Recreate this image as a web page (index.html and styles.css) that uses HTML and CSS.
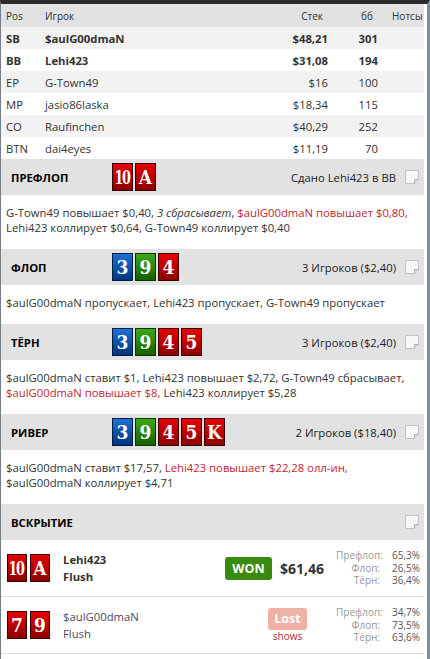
FILE: index.html
```html
<!DOCTYPE html>
<html lang="ru">
<head>
  <meta charset="UTF-8">
  <title>Раздача</title>
  <link rel="stylesheet" href="styles.css">
</head>
<body>
<div class="frame">

  <table class="seats">
    <colgroup>
      <col class="c-pos"><col class="c-name"><col class="c-stack"><col class="c-bb"><col class="c-notes">
    </colgroup>
    <thead>
      <tr><th>Pos</th><th>Игрок</th><th class="num">Стек</th><th class="num">бб</th><th>Нотсы</th></tr>
    </thead>
    <tbody>
      <tr class="hero"><td>SB</td><td>$aulG00dmaN</td><td class="num">$48,21</td><td class="num">301</td><td></td></tr>
      <tr class="hero"><td>BB</td><td>Lehi423</td><td class="num">$31,08</td><td class="num">194</td><td></td></tr>
      <tr><td>EP</td><td>G-Town49</td><td class="num">$16</td><td class="num">100</td><td></td></tr>
      <tr><td>MP</td><td>jasio86laska</td><td class="num">$18,34</td><td class="num">115</td><td></td></tr>
      <tr><td>CO</td><td>Raufinchen</td><td class="num">$40,29</td><td class="num">252</td><td></td></tr>
      <tr><td>BTN</td><td>dai4eyes</td><td class="num">$11,19</td><td class="num">70</td><td></td></tr>
    </tbody>
  </table>

  <div class="street-head">
    <span class="street-title">ПРЕФЛОП</span>
    <span class="cards"><span class="card red"><span class="ten">10</span></span><span class="card red">A</span></span>
    <span class="street-info">Сдано Lehi423 в BB</span>
    <svg class="note" width="14" height="14" viewBox="0 0 14 14"><path d="M0.5 0.5h13v9l-4 4h-9z" fill="#f7f7f7" stroke="#c2c2c2"/><path d="M13.5 9.5h-4v4" fill="#dedede" stroke="#b0b0b0"/></svg>
  </div>
  <div class="street-body">
    G-Town49 повышает $0,40, <i>3 сбрасывает</i>, <span class="hl">$aulG00dmaN повышает $0,80,</span>
    Lehi423 коллирует $0,64, G-Town49 коллирует $0,40
  </div>

  <div class="street-head">
    <span class="street-title">ФЛОП</span>
    <span class="cards"><span class="card blue">3</span><span class="card green">9</span><span class="card red">4</span></span>
    <span class="street-info">3 Игроков ($2,40)</span>
    <svg class="note" width="14" height="14" viewBox="0 0 14 14"><path d="M0.5 0.5h13v9l-4 4h-9z" fill="#f7f7f7" stroke="#c2c2c2"/><path d="M13.5 9.5h-4v4" fill="#dedede" stroke="#b0b0b0"/></svg>
  </div>
  <div class="street-body">
    $aulG00dmaN пропускает, Lehi423 пропускает, G-Town49 пропускает
  </div>

  <div class="street-head">
    <span class="street-title">ТЁРН</span>
    <span class="cards"><span class="card blue">3</span><span class="card green">9</span><span class="card red">4</span><span class="card red">5</span></span>
    <span class="street-info">3 Игроков ($2,40)</span>
    <svg class="note" width="14" height="14" viewBox="0 0 14 14"><path d="M0.5 0.5h13v9l-4 4h-9z" fill="#f7f7f7" stroke="#c2c2c2"/><path d="M13.5 9.5h-4v4" fill="#dedede" stroke="#b0b0b0"/></svg>
  </div>
  <div class="street-body">
    $aulG00dmaN ставит $1, Lehi423 повышает $2,72, G-Town49 сбрасывает,
    <span class="hl">$aulG00dmaN повышает $8,</span> Lehi423 коллирует $5,28
  </div>

  <div class="street-head">
    <span class="street-title">РИВЕР</span>
    <span class="cards"><span class="card blue">3</span><span class="card green">9</span><span class="card red">4</span><span class="card red">5</span><span class="card red">K</span></span>
    <span class="street-info">2 Игроков ($18,40)</span>
    <svg class="note" width="14" height="14" viewBox="0 0 14 14"><path d="M0.5 0.5h13v9l-4 4h-9z" fill="#f7f7f7" stroke="#c2c2c2"/><path d="M13.5 9.5h-4v4" fill="#dedede" stroke="#b0b0b0"/></svg>
  </div>
  <div class="street-body">
    $aulG00dmaN ставит $17,57, <span class="hl">Lehi423 повышает $22,28 олл-ин,</span>
    $aulG00dmaN коллирует $4,71
  </div>

  <div class="street-head">
    <span class="street-title">ВСКРЫТИЕ</span>
    <span class="street-info"></span>
    <svg class="note" width="14" height="14" viewBox="0 0 14 14"><path d="M0.5 0.5h13v9l-4 4h-9z" fill="#f7f7f7" stroke="#c2c2c2"/><path d="M13.5 9.5h-4v4" fill="#dedede" stroke="#b0b0b0"/></svg>
  </div>

  <div class="show-row">
    <span class="cards"><span class="card red"><span class="ten">10</span></span><span class="card red">A</span></span>
    <div class="who winner">Lehi423<br>Flush</div>
    <div class="result">
      <span class="badge won">WON</span>
      <span class="amount">$61,46</span>
    </div>
    <div class="equity">
      <span>Префлоп:</span><span>65,3%</span>
      <span>Флоп:</span><span>26,5%</span>
      <span>Тёрн:</span><span>36,4%</span>
    </div>
  </div>

  <div class="show-row">
    <span class="cards"><span class="card red">7</span><span class="card red">9</span></span>
    <div class="who">$aulG00dmaN<br>Flush</div>
    <div class="result">
      <div class="lost-wrap">
        <span class="badge lost">Lost</span>
        <span class="shows">shows</span>
      </div>
    </div>
    <div class="equity">
      <span>Префлоп:</span><span>34,7%</span>
      <span>Флоп:</span><span>73,5%</span>
      <span>Тёрн:</span><span>63,6%</span>
    </div>
  </div>

</div>
</body>
</html>
```

FILE: styles.css
```css
* {
  margin: 0;
  padding: 0;
  box-sizing: border-box;
}

body {
  background: #fff;
  color: #333;
  font-family: 'Open Sans', sans-serif;
  font-size: 11.3px;
}

.frame {
  width: 430px;
  min-height: 659px;
  border-top: 4px solid #2a2a2a;
  border-left: 1px solid #6f7f8f;
  border-right: 3px solid #7d8d9d;
  padding-right: 3px;
}

/* seats table */

.seats {
  width: 100%;
  border-collapse: collapse;
  table-layout: fixed;
}

.c-pos { width: 39px; }
.c-stack { width: 80px; }
.c-bb { width: 50px; }
.c-notes { width: 37px; }

.seats th {
  height: 23px;
  background: #e2e2e2;
  font-size: 10px;
  font-weight: normal;
  color: #333;
  text-align: left;
  padding-left: 5px;
}

.seats th.num {
  text-align: right;
  padding-right: 14px;
}

.seats td {
  height: 22px;
  padding-left: 5px;
  white-space: nowrap;
}

.seats td.num {
  text-align: right;
  padding-right: 9px;
}

.seats tbody tr:nth-child(odd) {
  background: #f2f2f2;
}

.seats tr.hero td {
  font-weight: bold;
}

/* streets */

.street-head {
  height: 36px;
  display: flex;
  align-items: center;
  background: #e2e2e2;
  padding: 0 5px 0 10px;
}

.street-title {
  width: 101px;
  font-weight: bold;
  color: #000;
}

.street-info {
  margin-left: auto;
  color: #222;
}

.note {
  margin-left: 9px;
  display: block;
}

.street-body {
  padding: 10px 6px 14px 5px;
  line-height: 15px;
}

.hl {
  color: #c42530;
}

/* cards */

.cards {
  display: flex;
  gap: 2px;
}

.card {
  width: 21px;
  height: 28px;
  border: 1px solid #3a0000;
  font-family: 'DejaVu Serif Condensed', 'DejaVu Serif', serif;
  font-weight: bold;
  font-size: 19px;
  line-height: 26px;
  color: #fff;
  text-align: center;
  overflow: hidden;
}

.card.red {
  background: linear-gradient(#e80000, #8c0000);
}

.card.blue {
  background: linear-gradient(#1c72d6, #00347e);
  border-color: #001c44;
}

.card.green {
  background: linear-gradient(#3aaa16, #155f00);
  border-color: #0c3300;
}

.ten {
  display: inline-block;
  letter-spacing: -2px;
  transform: scaleX(0.75);
  margin-left: -5px;
  margin-right: -3px;
}

/* showdown */

.show-row {
  height: 57px;
  display: flex;
  align-items: center;
  border-bottom: 1px solid #ddd;
  padding: 0 4px 0 6px;
}

.show-row .cards {
  gap: 3px;
}

.show-row .card {
  width: 20px;
}

.who {
  margin-left: 13px;
  line-height: 17px;
  color: #4a4a66;
}

.who.winner {
  font-weight: bold;
  color: #333;
}

.result {
  margin-left: auto;
  display: flex;
  align-items: center;
  justify-content: flex-end;
}

.badge {
  display: inline-block;
  color: #fff;
  font-weight: bold;
  font-size: 12.5px;
  border-radius: 3px;
  text-align: center;
}

.badge.won {
  width: 47px;
  height: 23px;
  line-height: 23px;
  background: #3b8a10;
}

.amount {
  margin-left: 8px;
  font-weight: bold;
  font-size: 14px;
}

.lost-wrap {
  display: flex;
  flex-direction: column;
  align-items: center;
  margin-right: 17px;
}

.badge.lost {
  width: 39px;
  height: 22px;
  line-height: 22px;
  background: #efb1a3;
}

.shows {
  font-size: 10px;
  color: #b02838;
  line-height: 13px;
}

.equity {
  margin-left: 12px;
  display: grid;
  grid-template-columns: 44px 40px;
  font-size: 10px;
  line-height: 12.5px;
  text-align: right;
}

.equity span:nth-child(odd) {
  color: #999;
}

.equity span:nth-child(even) {
  color: #555;
}
```
